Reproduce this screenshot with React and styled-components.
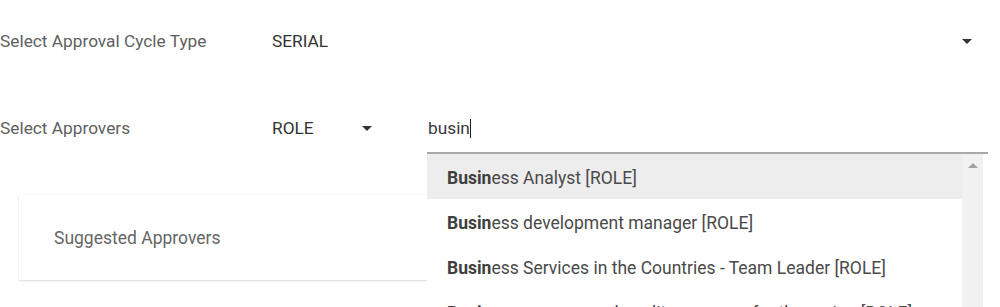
import React from "react";
import styled, { createGlobalStyle } from "styled-components";

const Global = createGlobalStyle`
  html, body { margin: 0; padding: 0; background: #fff; }
  body { font-family: Roboto, "Noto Sans", Arial, sans-serif; overflow: hidden; }
  * { box-sizing: border-box; }
`;

const Page = styled.div`
  width: 1000px;
  height: 307px;
  padding-top: 17px;
  display: flex;
  flex-direction: column;
`;

const FormRow = styled.div`
  display: flex;
  align-items: center;
  height: 48px;
  margin-bottom: ${(p) => p.$gap || 0}px;
  padding-right: 12px;
`;

const Label = styled.div`
  width: 272px;
  flex: none;
  font-size: 17.3px;
  color: #616161;
`;

const Select = styled.div`
  display: flex;
  align-items: center;
  justify-content: space-between;
  height: 100%;
  flex: ${(p) => (p.$width ? "none" : "1")};
  width: ${(p) => (p.$width ? `${p.$width}px` : "auto")};
  padding-right: ${(p) => p.$padRight}px;
  font-size: 17.3px;
  color: #333;
`;

const Caret = styled.span`
  width: 0;
  height: 0;
  border-left: 5px solid transparent;
  border-right: 5px solid transparent;
  border-top: 5px solid #333;
`;

const CaretUp = styled.span`
  width: 0;
  height: 0;
  border-left: 5px solid transparent;
  border-right: 5px solid transparent;
  border-bottom: 5px solid #a3a3a3;
`;

const InputWrap = styled.div`
  position: relative;
  flex: 1;
  margin-left: 41px;
  height: 50px;
  align-self: flex-start;
  display: flex;
  align-items: center;
  padding-left: 1px;
  border-bottom: 2px solid #a9a9a9;
  font-size: 17.3px;
  color: #3a3a3a;
`;

const Cursor = styled.span`
  display: inline-block;
  width: 1px;
  height: 19px;
  background: #222;
  vertical-align: middle;
`;

const Menu = styled.div`
  position: absolute;
  top: calc(100% + 2px);
  left: 0;
  width: 556px;
  display: flex;
  background: #fff;
  z-index: 5;
  height: 240px;
`;

const Options = styled.div`
  flex: 1;
  display: flex;
  flex-direction: column;
`;

const Option = styled.div`
  height: 45px;
  flex: none;
  display: flex;
  align-items: center;
  padding-left: 20px;
  padding-top: 2px;
  font-size: 17.5px;
  color: #4a4a4a;
  white-space: nowrap;
  background: ${(p) => (p.$active ? "#ededed" : "#fff")};
  b { font-weight: 700; color: #3e3e3e; }
`;

const Scrollbar = styled.div`
  width: 21px;
  flex: none;
  background: #f1f1f1;
  display: flex;
  justify-content: center;
  padding-top: 9px;
`;

const Card = styled.div`
  margin: 43px 19px 0 19px;
  height: 85px;
  display: flex;
  align-items: center;
  padding-left: 35px;
  background: #fff;
  box-shadow: 0 1px 2px rgba(0, 0, 0, 0.14), 0 0 1px rgba(0, 0, 0, 0.1);
  font-size: 17.5px;
  color: #666;
`;

const options = [
  "ess Analyst [ROLE]",
  "ess development manager [ROLE]",
  "ess Services in the Countries - Team Leader [ROLE]",
  "ess process and quality manager for the region [ROLE]",
];

export default function App() {
  return (
    <>
      <Global />
      <Page>
        <FormRow $gap={39}>
          <Label>Select Approval Cycle Type</Label>
          <Select $padRight={16}>
            <span>SERIAL</span>
            <Caret />
          </Select>
        </FormRow>
        <FormRow>
          <Label>Select Approvers</Label>
          <Select $width={114} $padRight={14}>
            <span>ROLE</span>
            <Caret />
          </Select>
          <InputWrap>
            <span>
              busin
              <Cursor />
            </span>
            <Menu>
              <Options>
                {options.map((o, i) => (
                  <Option key={i} $active={i === 0}>
                    <b>Busin</b>
                    {o}
                  </Option>
                ))}
              </Options>
              <Scrollbar>
                <CaretUp />
              </Scrollbar>
            </Menu>
          </InputWrap>
        </FormRow>
        <Card>Suggested Approvers</Card>
      </Page>
    </>
  );
}
